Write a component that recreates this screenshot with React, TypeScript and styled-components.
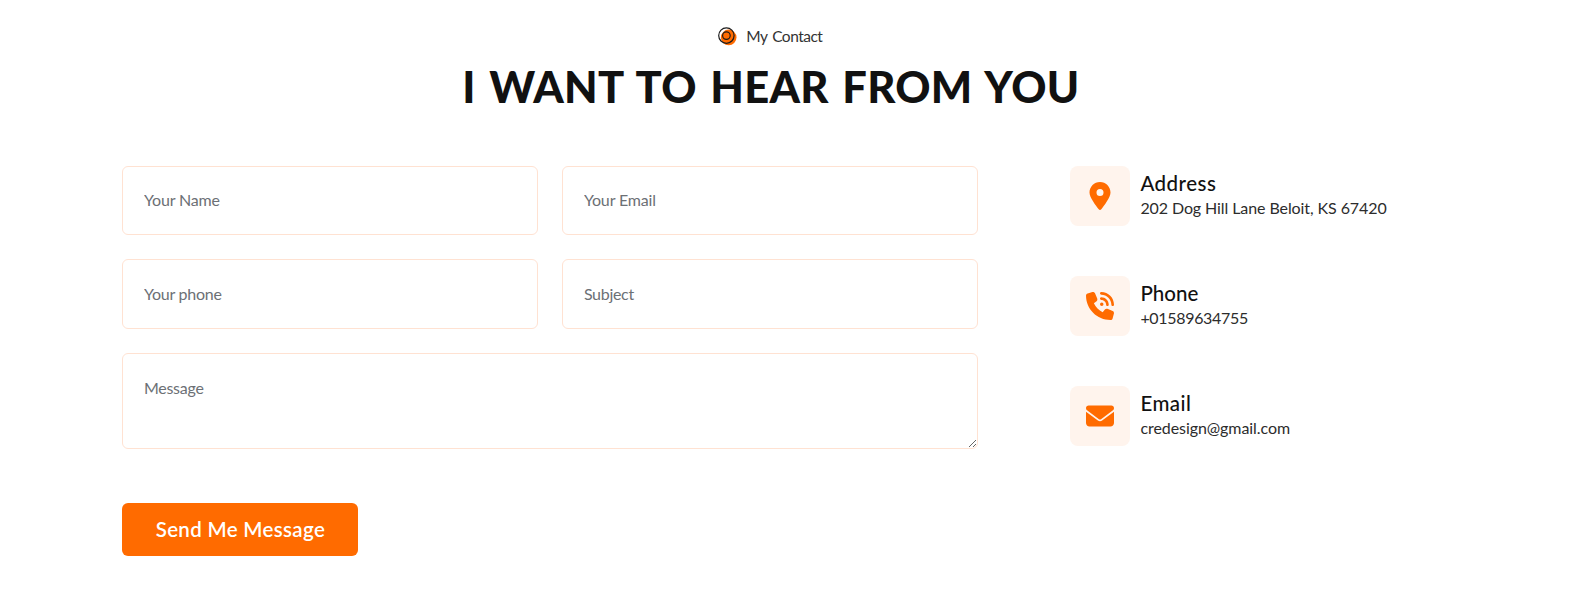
import React from 'react';
import styled, { createGlobalStyle } from 'styled-components';
import { FaEnvelope, FaLocationDot, FaPhoneVolume } from 'react-icons/fa6';

const GlobalStyle = createGlobalStyle`
  *, *::before, *::after { box-sizing: border-box; }
  body {
    margin: 0;
    background: #fff;
    color: #111;
    font-family: Lato, "Liberation Sans", sans-serif;
  }
`;

const Section = styled.section`
  width: 1297px;
  margin-left: 122.4px;
  padding-top: 24px;
`;

const Heading = styled.header`
  display: flex;
  flex-direction: column;
  align-items: center;
`;

const Eyebrow = styled.div`
  display: flex;
  align-items: center;
  height: 24px;
  gap: 9px;
  margin-right: 2px;
  font-size: 15.5px;
  letter-spacing: -0.5px;
  word-spacing: 1.5px;
  color: #333;
`;

const Title = styled.h2`
  margin: 11px 0 0;
  height: 54px;
  font-size: 43.5px;
  line-height: 54px;
  font-weight: 900;
  letter-spacing: 0.27px;
  word-spacing: 3px;
  white-space: nowrap;
`;

const Columns = styled.div`
  display: flex;
  align-items: flex-start;
  gap: 92px;
  margin-top: 52.6px;
`;

const Form = styled.form`
  display: grid;
  grid-template-columns: 416px 416px;
  column-gap: 24px;
  row-gap: 24px;
  justify-items: start;
`;

const fieldStyle = `
  display: block;
  width: 100%;
  margin: 0;
  padding: 0 20px 0 20.5px;
  border: 1px solid #ffe2d2;
  border-radius: 6px;
  outline: 0;
  background: #fff;
  font-family: inherit;
  font-size: 16px;
  line-height: 24px;
  &::placeholder { color: #6c7075; opacity: 1; }
`;

const Input = styled.input<{ $tracking: number }>`
  ${fieldStyle}
  height: 69.5px;
  padding-bottom: 1px;
  letter-spacing: ${(p) => p.$tracking}px;
`;

const TextArea = styled.textarea`
  ${fieldStyle}
  grid-column: 1 / -1;
  height: 96px;
  padding-top: 22px;
  letter-spacing: -0.25px;
  resize: vertical;
`;

const SubmitButton = styled.button`
  width: 236px;
  height: 53px;
  margin-top: 30px;
  padding: 0;
  border: 0;
  border-radius: 6px;
  background: #ff6b00;
  color: #fff;
  font: 600 20.5px/52px Lato, "Liberation Sans", sans-serif;
  letter-spacing: 0.33px;
`;

const ContactList = styled.ul`
  display: flex;
  flex-direction: column;
  gap: 50px;
  margin: 0;
  padding: 0;
  list-style: none;
`;

const ContactItem = styled.li`
  display: flex;
  gap: 10px;
  height: 60px;
`;

const IconTile = styled.span`
  display: flex;
  align-items: center;
  justify-content: center;
  width: 60px;
  height: 60px;
  border-radius: 8px;
  background: #fff4ed;
  color: #ff6b00;
  font-size: 28px;
`;

const ContactText = styled.div`
  padding-top: 4.4px;
`;

const ContactName = styled.h3<{ $tracking: number }>`
  margin: 0;
  font-size: 20.5px;
  line-height: 26px;
  font-weight: 500;
  letter-spacing: ${(p) => p.$tracking}px;
`;

const ContactDetail = styled.p<{ $tracking: number }>`
  margin: 0;
  font-size: 16px;
  line-height: 24px;
  color: #2c2c2c;
  letter-spacing: ${(p) => p.$tracking}px;
  white-space: nowrap;
`;

const TargetMark = () => (
  <svg width="20" height="20" viewBox="0 0 20 20" fill="none">
    <circle cx="11.7" cy="11.4" r="7.8" fill="#ff6b00" />
    <circle cx="9.4" cy="9.6" r="7.7" stroke="#1b1b1b" strokeWidth="1.2" />
    <circle cx="9.4" cy="9.6" r="3.8" stroke="#1b1b1b" strokeWidth="1.2" />
  </svg>
);

const fields = [
  { label: 'Your Name', type: 'text', tracking: -0.15 },
  { label: 'Your Email', type: 'email', tracking: -0.16 },
  { label: 'Your phone', type: 'tel', tracking: -0.23 },
  { label: 'Subject', type: 'text', tracking: -0.3 },
];

const contacts = [
  { name: 'Address', nameTracking: 0.48, detail: '202 Dog Hill Lane Beloit, KS 67420', tracking: -0.09, Icon: FaLocationDot },
  { name: 'Phone', nameTracking: 0.02, detail: '+01589634755', tracking: -0.32, Icon: FaPhoneVolume },
  { name: 'Email', nameTracking: 0.45, detail: 'credesign@gmail.com', tracking: -0.07, Icon: FaEnvelope },
];

export default function App() {
  return (
    <>
      <GlobalStyle />
      <Section>
        <Heading>
          <Eyebrow>
            <TargetMark />
            My Contact
          </Eyebrow>
          <Title>I WANT TO HEAR FROM YOU</Title>
        </Heading>
        <Columns>
          <Form>
            {fields.map((f) => (
              <Input key={f.label} type={f.type} placeholder={f.label} $tracking={f.tracking} />
            ))}
            <TextArea placeholder="Message" />
            <SubmitButton type="button">Send Me Message</SubmitButton>
          </Form>
          <ContactList>
            {contacts.map(({ name, nameTracking, detail, tracking, Icon }) => (
              <ContactItem key={name}>
                <IconTile>
                  <Icon />
                </IconTile>
                <ContactText>
                  <ContactName $tracking={nameTracking}>{name}</ContactName>
                  <ContactDetail $tracking={tracking}>{detail}</ContactDetail>
                </ContactText>
              </ContactItem>
            ))}
          </ContactList>
        </Columns>
      </Section>
    </>
  );
}
